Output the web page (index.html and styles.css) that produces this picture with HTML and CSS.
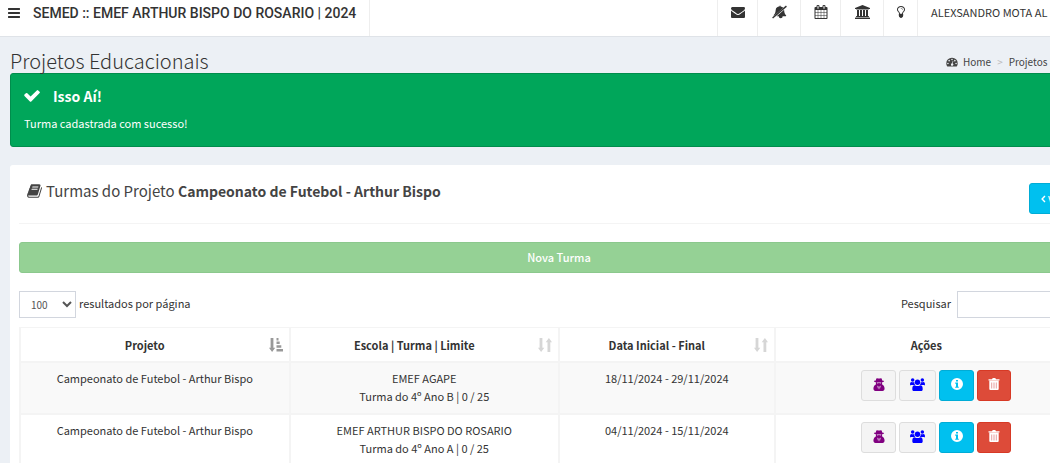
FILE: index.html
```html
<!DOCTYPE html>
<html lang="pt-BR">
<head>
<meta charset="utf-8">
<title>Projetos Educacionais</title>
<link rel="stylesheet" href="styles.css">
</head>
<body>
<svg class="sprite" aria-hidden="true">
  <symbol id="bars" viewBox="0 0 1536 1792"><path d="M1536 1344v128q0 26-19 45t-45 19H64q-26 0-45-19t-19-45v-128q0-26 19-45t45-19h1408q26 0 45 19t19 45zm0-512v128q0 26-19 45t-45 19H64q-26 0-45-19T0 960V832q0-26 19-45t45-19h1408q26 0 45 19t19 45zm0-512v128q0 26-19 45t-45 19H64q-26 0-45-19T0 448V320q0-26 19-45t45-19h1408q26 0 45 19t19 45z"/></symbol>
  <symbol id="envelope" viewBox="0 0 1792 1792"><path d="M1792 710v794q0 66-47 113t-113 47H160q-66 0-113-47T0 1504V710q44 49 101 87 362 246 497 345 57 42 92.500 65.500t94.500 48 110 24.500h2q51 0 110-24.500t94.500-48 92.500-65.500q170-123 498-345 57-39 100-87zm0-294q0 79-49 151t-122 123q-376 261-468 325-10 7-42.500 30.500t-54 38-52 32.500-57.500 27-50 9h-2q-23 0-50-9t-57.500-27-52-32.500-54-38T640 1015q-91-64-262-182.500T173 690q-62-42-117-115.500T1 438q0-78 41.500-130T161 256h1472q65 0 112 47t47 113z"/></symbol>
  <symbol id="bell-off" viewBox="0 0 16 14"><path d="M8.200.2Q9.200 0 9.200 1q1.700.2 2.900 1.500L2.700 10.600H1.500C3.200 9 3.700 7.400 3.900 5 4.100 2.700 5.600 1.200 8.200.9zM12.900 4.500c.2 2.900.5 4.600 2.200 6.100.2.500 0 .9-.5.900h-3.200a2.100 2.100 0 0 1-4.200 0H5z"/><path d="M14.900.1l1 1.200L1.100 14 .1 12.800z"/></symbol>
  <symbol id="calendar" viewBox="0 0 1664 1792"><path d="M128 1664h288v-288H128v288zm352 0h320v-288H480v288zM128 1312h288V992H128v320zm352 0h320V992H480v320zM128 928h288V640H128v288zm736 736h320v-288H864v288zM480 928h320V640H480v288zm768 736h288v-288h-288v288zm-384-352h320V992H864v320zM512 448V160q0-13-9.500-22.500T480 128h-64q-13 0-22.500 9.500T384 160v288q0 13 9.500 22.500T416 480h64q13 0 22.500-9.500T512 448zm736 864h288V992h-288v320zM864 928h320V640H864v288zm384 0h288V640h-288v288zm32-480V160q0-13-9.500-22.500T1248 128h-64q-13 0-22.500 9.500T1152 160v288q0 13 9.500 22.500t22.500 9.500h64q13 0 22.500-9.500t9.500-22.500zm384-64v1280q0 52-38 90t-90 38H128q-52 0-90-38t-38-90V384q0-52 38-90t90-38h128v-96q0-66 47-113T416 0h64q66 0 113 47t47 113v96h384v-96q0-66 47-113t113-47h64q66 0 113 47t47 113v96h128q52 0 90 38t38 90z"/></symbol>
  <symbol id="bank" viewBox="0 0 1920 1792"><path d="M960 0l960 384v128h-128q0 26-20.500 45t-48.500 19H197q-28 0-48.500-19T128 512H0V384zM256 640h256v768h128V640h256v768h128V640h256v768h128V640h256v768h59q28 0 48.500 19t20.500 45v64H128v-64q0-26 20.500-45t48.500-19h59V640zm1595 960q28 0 48.500 19t20.500 45v128H0v-128q0-26 20.500-45t48.500-19h1782z"/></symbol>
  <symbol id="bulb" viewBox="0 0 1024 1792"><path d="M736 576q0 13-9.500 22.500T704 608t-22.500-9.500T672 576q0-46-54-71t-106-25q-13 0-22.500-9.500T480 448t9.500-22.500T512 416q50 0 99.500 16t87 54 37.500 90zm160 0q0-72-34.500-134t-90-101.500-123-62T512 256t-136.500 22.500-123 62-90 101.500T128 576q0 101 68 180 10 11 30.500 33t30.500 33q128 153 141 298h228q13-145 141-298 10-11 30.500-33t30.500-33q68-79 68-180zm128 0q0 155-103 268-45 49-74.500 87t-59.500 95.500-34 107.500q47 28 47 82 0 37-25 64 25 27 25 64 0 52-45 81 13 23 13 47 0 46-31.500 71t-77.500 25q-20 44-60 70t-87 26-87-26-60-70q-46 0-77.500-25t-31.500-71q0-24 13-47-45-29-45-81 0-37 25-64-25-27-25-64 0-54 47-82-4-50-34-107.500T177.500 931 103 844Q0 731 0 576q0-99 44.500-184.500t117-142 164-89T512 128t186.500 32.500 164 89 117 142T1024 576z"/></symbol>
  <symbol id="gauge" viewBox="0 0 16 14"><path fill-rule="evenodd" d="M8 1a7.900 7.900 0 0 0-8 8c0 1.500.4 2.900 1.200 4.100.1.200.3.300.6.300h12.400c.3 0 .5-.1.600-.3A7.700 7.700 0 0 0 16 9a7.900 7.900 0 0 0-8-8zM2.300 8a1.100 1.100 0 1 1 0 2.200 1.100 1.100 0 0 1 0-2.200zM4 4a1.100 1.100 0 1 1 0 2.200A1.100 1.100 0 0 1 4 4zm4-1.700a1.100 1.100 0 1 1 0 2.200 1.100 1.100 0 0 1 0-2.200zM12 4a1.100 1.100 0 1 1 0 2.200A1.100 1.100 0 0 1 12 4zm1.700 4a1.100 1.100 0 1 1 0 2.200 1.100 1.100 0 0 1 0-2.200zM9.100 5.400l.8.200-.9 3.500a1.700 1.700 0 1 1-.8-.2z"/></symbol>
  <symbol id="check" viewBox="0 0 16 12"><path d="M15.600 3.100 7.300 11.400q-.7.600-1.400 0L.5 6q-.6-.7 0-1.400l1.400-1.400q.7-.6 1.400 0l3.300 3.300L12.800.4q.7-.6 1.400 0l1.400 1.400q.6.600 0 1.300z"/></symbol>
  <symbol id="book" viewBox="0 0 1664 1792"><path d="M1639 478q40 57 18 129l-275 906q-19 64-76.500 107.500T1183 1664H260q-77 0-148.500-53.500T12 1479q-24-67-2-127 0-4 3-27t4-37q1-8-3-21.500t-3-19.500q2-11 8-21t16.500-23.500T52 1179q23-38 45-91.500t30-91.500q3-10 .5-30t-.5-28q3-11 17-28t17-23q21-36 42-92t25-90q1-9-2.500-32t.5-28q4-13 22-30.500t22-22.500q19-26 42.500-84.500T340 411q1-8-3-25.500t-2-26.500q2-8 9-18t18-23 17-21q8-12 16.500-30.500t15-35 16-36 19.500-32 26.500-23.500 36-11.500T556 134l-1 3q38-9 51-9h761q74 0 114 56t18 130l-274 906q-36 119-71.500 153.500T1025 1408H156q-27 0-38 15-11 16-1 43 24 70 144 70h923q29 0 56-15.500t35-41.500l300-987q7-22 5-57 38 15 59 43zm-1064 2q-4 13 2 22.500t20 9.500h608q13 0 25.500-9.500T1247 480l21-64q4-13-2-22.500t-20-9.500H638q-13 0-25.500 9.500T596 416zm-83 256q-4 13 2 22.500t20 9.500h608q13 0 25.500-9.500T1164 736l21-64q4-13-2-22.500t-20-9.500H555q-13 0-25.500 9.500T513 672z"/></symbol>
  <symbol id="chevron" viewBox="0 0 6 10"><path d="M5.500 1.800 2.400 5l3.100 3.200-1.300 1.300L0 5 4.200.5z"/></symbol>
  <symbol id="sort-asc" viewBox="0 0 14 14"><path d="M1.600 0h2.800v9.800H6.200L3.100 14 0 9.800h1.600zM7.500 0h2v2.500h-2zM7.500 3.500h3.200V6H7.500zM7.500 7.200h4.800v2.500H7.500zM7.500 11H14v2.600H7.500z"/></symbol>
  <symbol id="sort" viewBox="0 0 14 14"><path d="M1.600 0h2.800v9.800h1.900L3.100 14 0 9.800h1.600zM9.500 14V4.200H7.700L10.900 0 14 4.200h-1.700V14z"/></symbol>
  <symbol id="agent" viewBox="0 0 12 14"><path fill-rule="evenodd" d="M3.500.4c.7-.4 1.500.2 2.500.2S7.800 0 8.500.4c.6.500.8 1.600 1 2.400 1.300.2 2 .4 2 .7s-.9.700-2 .9c.1.800 0 1.500-.4 2.200C11 7.300 12 9 12 11.400 12 13.200 11.200 14 9.800 14H2.200C.8 14 0 13.200 0 11.400 0 9 1 7.300 2.900 6.600 2.500 5.900 2.400 5.200 2.500 4.400 1.400 4.200.5 3.800.5 3.500s.7-.5 2-.7c.2-.8.4-1.900 1-2.400zM3.600 4.800v.6c.5.700 1.600.7 2 0h.8c.4.700 1.500.7 2 0v-.6zM4.200 8l.9 4.500.5-3zM7.800 8l-.9 4.500-.5-3z"/></symbol>
  <symbol id="users" viewBox="0 0 16 14"><circle cx="2.800" cy="2.200" r="1.900"/><circle cx="13.200" cy="2.200" r="1.900"/><circle cx="8" cy="4.600" r="2.900"/><path d="M0 7.500V6.300C0 5 .6 4.200 1.500 4.200c1 .6 2 .6 3 .2-.1 1.300.2 2.300 1 3.100H1Q0 8.500 0 7.500zM16 7.500V6.300c0-1.300-.6-2.100-1.500-2.100-1 .6-2 .6-3 .2.100 1.300-.2 2.300-1 3.100H15q1 1 1 0zM2.400 12c0-2.600.6-4.300 2.600-4.300 2 1.300 4 1.300 6 0 2 0 2.600 1.700 2.600 4.300 0 1.300-.8 2-2 2H4.400c-1.200 0-2-.7-2-2z"/></symbol>
  <symbol id="info" viewBox="0 0 12 12"><path fill-rule="evenodd" d="M6 0a6 6 0 1 1 0 12A6 6 0 0 1 6 0zM5 2v1.500h2V2zM4.200 4.600v1.100H5v3h-.8v1.100h3.600V8.700H7V4.600z"/></symbol>
  <symbol id="trash" viewBox="0 0 11 12"><path d="M3.500 1.200 4 .3Q4.200 0 4.600 0h1.800q.4 0 .6.300l.5.900H11v1.400H0V1.200z"/><path d="M.8 2.600h9.400V11q0 1-1 1H1.800q-1 0-1-1z"/><path class="slot" d="M2.700 4.500h1v6h-1zM5 4.500h1v6H5zM7.300 4.500h1v6h-1z"/></symbol>
</svg>

<div class="page">
  <header class="topbar">
    <button class="menu" aria-label="Menu"><svg class="i-menu"><use href="#bars"/></svg></button>
    <a class="brand" href="#">SEMED :: EMEF ARTHUR BISPO DO ROSARIO | 2024</a>
    <nav class="tools">
      <a class="tool" href="#" aria-label="Mensagens"><svg class="i14"><use href="#envelope"/></svg></a>
      <a class="tool wide" href="#" aria-label="Notificações"><svg class="i16"><use href="#bell-off"/></svg></a>
      <a class="tool" href="#" aria-label="Calendário"><svg class="i14"><use href="#calendar"/></svg></a>
      <a class="tool wide" href="#" aria-label="Instituição"><svg class="i16"><use href="#bank"/></svg></a>
      <a class="tool slim" href="#" aria-label="Dicas"><svg class="i14"><use href="#bulb"/></svg></a>
      <a class="user" href="#">ALEXSANDRO MOTA AL</a>
    </nav>
  </header>

  <main class="content">
    <div class="heading">
      <h1>Projetos Educacionais</h1>
      <nav class="crumbs">
        <a href="#"><svg class="i-gauge"><use href="#gauge"/></svg>Home</a>
        <span class="sep">&gt;</span>
        <a href="#">Projetos Educacionais</a>
      </nav>
    </div>

    <div class="alert" role="alert">
      <h4><svg class="i-check"><use href="#check"/></svg>Isso Aí!</h4>
      <p>Turma cadastrada com sucesso!</p>
    </div>

    <section class="box">
      <div class="box-head">
        <h2><svg class="i-book"><use href="#book"/></svg><span>Turmas do Projeto <b>Campeonato de Futebol - Arthur Bispo</b></span></h2>
        <a class="back" href="#"><svg class="i-chev"><use href="#chevron"/></svg>Voltar</a>
      </div>
      <button class="new">Nova Turma</button>
      <div class="filters">
        <label><select><option>100</option></select>resultados por página</label>
        <label class="search">Pesquisar<input type="search"></label>
      </div>
      <table>
        <colgroup><col class="c25"><col class="c25"><col class="c20"><col class="c30"></colgroup>
        <thead>
          <tr>
            <th><div class="th"><span>Projeto</span><svg class="i-sort on"><use href="#sort-asc"/></svg></div></th>
            <th><div class="th"><span>Escola | Turma | Limite</span><svg class="i-sort"><use href="#sort"/></svg></div></th>
            <th><div class="th"><span>Data Inicial - Final</span><svg class="i-sort"><use href="#sort"/></svg></div></th>
            <th><div class="th"><span>Ações</span><svg class="i-sort"><use href="#sort"/></svg></div></th>
          </tr>
        </thead>
        <tbody>
          <tr>
            <td>Campeonato de Futebol - Arthur Bispo</td>
            <td>EMEF AGAPE<br>Turma do 4º Ano B | 0 / 25</td>
            <td>18/11/2024 - 29/11/2024</td>
            <td><div class="actions">
              <button class="act agent" aria-label="Responsável"><svg><use href="#agent"/></svg></button>
              <button class="act users" aria-label="Alunos"><svg><use href="#users"/></svg></button>
              <button class="act info" aria-label="Informações"><svg><use href="#info"/></svg></button>
              <button class="act trash" aria-label="Excluir"><svg><use href="#trash"/></svg></button>
            </div></td>
          </tr>
          <tr>
            <td>Campeonato de Futebol - Arthur Bispo</td>
            <td>EMEF ARTHUR BISPO DO ROSARIO<br>Turma do 4º Ano A | 0 / 25</td>
            <td>04/11/2024 - 15/11/2024</td>
            <td><div class="actions">
              <button class="act agent" aria-label="Responsável"><svg><use href="#agent"/></svg></button>
              <button class="act users" aria-label="Alunos"><svg><use href="#users"/></svg></button>
              <button class="act info" aria-label="Informações"><svg><use href="#info"/></svg></button>
              <button class="act trash" aria-label="Excluir"><svg><use href="#trash"/></svg></button>
            </div></td>
          </tr>
        </tbody>
      </table>
    </section>
  </main>
</div>
</body>
</html>
```
FILE: styles.css
```css
* { box-sizing: border-box; }
html { overflow: hidden; }
body {
  margin: 0;
  overflow: hidden;
  background: #ecf0f5;
  color: #333;
  font: 11px/18px "Noto Sans CJK SC", "Open Sans", sans-serif;
}
a { color: inherit; text-decoration: none; }
button, input, select { font: inherit; }
h1, h2, h4, p { margin: 0; font-weight: 400; }
svg { fill: currentColor; flex: none; }
.sprite { display: none; }

/* the layout runs past the right edge of the window */
.page { margin-right: -68px; }

.topbar {
  display: flex;
  height: 37px;
  background: #fff;
  border-bottom: 1px solid #dfe3e8;
}
.menu {
  width: 33px;
  padding: 0 0 0 8px;
  border: 0;
  background: none;
  color: #333;
  text-align: left;
}
.menu svg { display: block; margin-bottom: 10px; }
.i-menu { width: 12px; height: 14px; }
.brand {
  padding: 4px 13px 0 0;
  border-right: 1px solid #eee;
  font: 500 14px/18px Roboto, "Liberation Sans", sans-serif;
  white-space: nowrap;
}
.tools { display: flex; flex: none; width: 401px; margin-left: auto; }
.tool {
  display: flex;
  justify-content: center;
  width: 40px;
  padding-top: 5px;
  border-left: 1px solid #eee;
}
.tool.wide { width: 43px; }
.tool.slim { width: 34px; }
.i14 { width: 14px; height: 14px; }
.i16 { width: 15px; height: 14px; }
.user { flex: 1; padding: 3px 13px 0; border-left: 1px solid #eee; white-space: nowrap; }

.content { padding: 0 10px; }
.heading { display: flex; justify-content: space-between; height: 36px; padding-top: 12px; }
h1 { font-size: 20px; line-height: 24px; font-weight: 300; }
.crumbs { display: flex; gap: 6px; width: 162px; padding: 4px 0 0; font-size: 10px; color: #444; white-space: nowrap; }
.crumbs a { display: flex; height: 18px; align-items: center; gap: 5px; }
.sep { color: #bbb; }
.i-gauge { width: 12px; height: 10px; }

.alert {
  height: 74px;
  padding: 13px;
  border: 1px solid #008d4c;
  border-radius: 3px;
  background: #00a65a;
  color: #fff;
}
.alert h4 { display: flex; align-items: center; gap: 13px; font-size: 14px; font-weight: 700; margin-bottom: 9px; }
.i-check { width: 16px; height: 12px; }

.box { margin-top: 18px; padding: 0 9px 20px; border-radius: 3px; background: #fff; }
.box-head {
  display: flex;
  justify-content: space-between;
  height: 59px;
  padding: 18px 8px 0;
  border-bottom: 1px solid #f4f4f4;
}
h2 { display: flex; height: 16px; align-items: center; gap: 4px; font-size: 15px; color: #444; }
h2 b { font-size: 14px; }
.i-book { width: 15px; height: 16px; }
.back {
  display: flex;
  align-items: center;
  gap: 2px;
  width: 62px;
  height: 31px;
  padding-left: 11px;
  border: 1px solid #00acd6;
  border-radius: 3px;
  background: #00c0ef;
  color: #fff;
}
.i-chev { width: 5px; height: 8px; }
.new {
  display: block;
  width: 100%;
  height: 31px;
  margin: 18px 0;
  padding: 0 0 2px;
  border: 1px solid #8bc88d;
  border-radius: 3px;
  background: #95d195;
  color: #fff;
  font-weight: 500;
}
.filters { display: flex; justify-content: space-between; margin-bottom: 9px; line-height: 24px; }
.filters label { display: flex; align-items: flex-start; gap: 3px; }
.filters .search { gap: 6px; }
.filters select, .filters input { height: 27px; border: 1px solid #d2d6de; background: #fff; color: #555; }
.filters select { width: 57px; padding: 0 0 0 7px; font-size: 10px; }
.filters input { width: 142px; }

table { width: 100%; table-layout: fixed; border-collapse: separate; border-spacing: 0; border: 0 solid #f4f4f4; border-width: 1px 0 0 2px; }
.c25 { width: 25%; }
.c20 { width: 20%; }
.c30 { width: 30%; }
th, td { border: 0 solid #f4f4f4; border-width: 0 2px 2px 0; text-align: center; vertical-align: top; }
th { padding: 7px 6px 7px 8px; }
td { padding: 6px 8px 8px; }
td:last-child { padding: 7px 8px 0; }
tbody tr:nth-child(odd) { background: #f9f9f9; }
.th { display: flex; align-items: center; gap: 8px; height: 19px; }
.th span { flex: 1; }
.i-sort { width: 14px; height: 14px; color: #d6d6d6; }
.i-sort.on { color: #999; }
.actions { display: flex; justify-content: center; gap: 3px; height: 31px; }
.act {
  display: flex;
  align-items: center;
  justify-content: center;
  width: 35px;
  padding: 0 0 3px;
  border: 1px solid #ddd;
  border-radius: 3px;
  background: #f4f4f4;
}
.act svg { width: 12px; height: 12px; }
.act.agent { color: purple; }
.act.agent svg { height: 13px; }
.act.users { width: 37px; color: blue; }
.act.users svg { width: 15px; height: 13px; }
.act.info { border-color: #00acd6; background: #00c0ef; color: #fff; }
.act.trash { width: 34px; border-color: #d73925; background: #dd4b39; color: #fff; }
.slot { fill: #e8a0a0; }
```
